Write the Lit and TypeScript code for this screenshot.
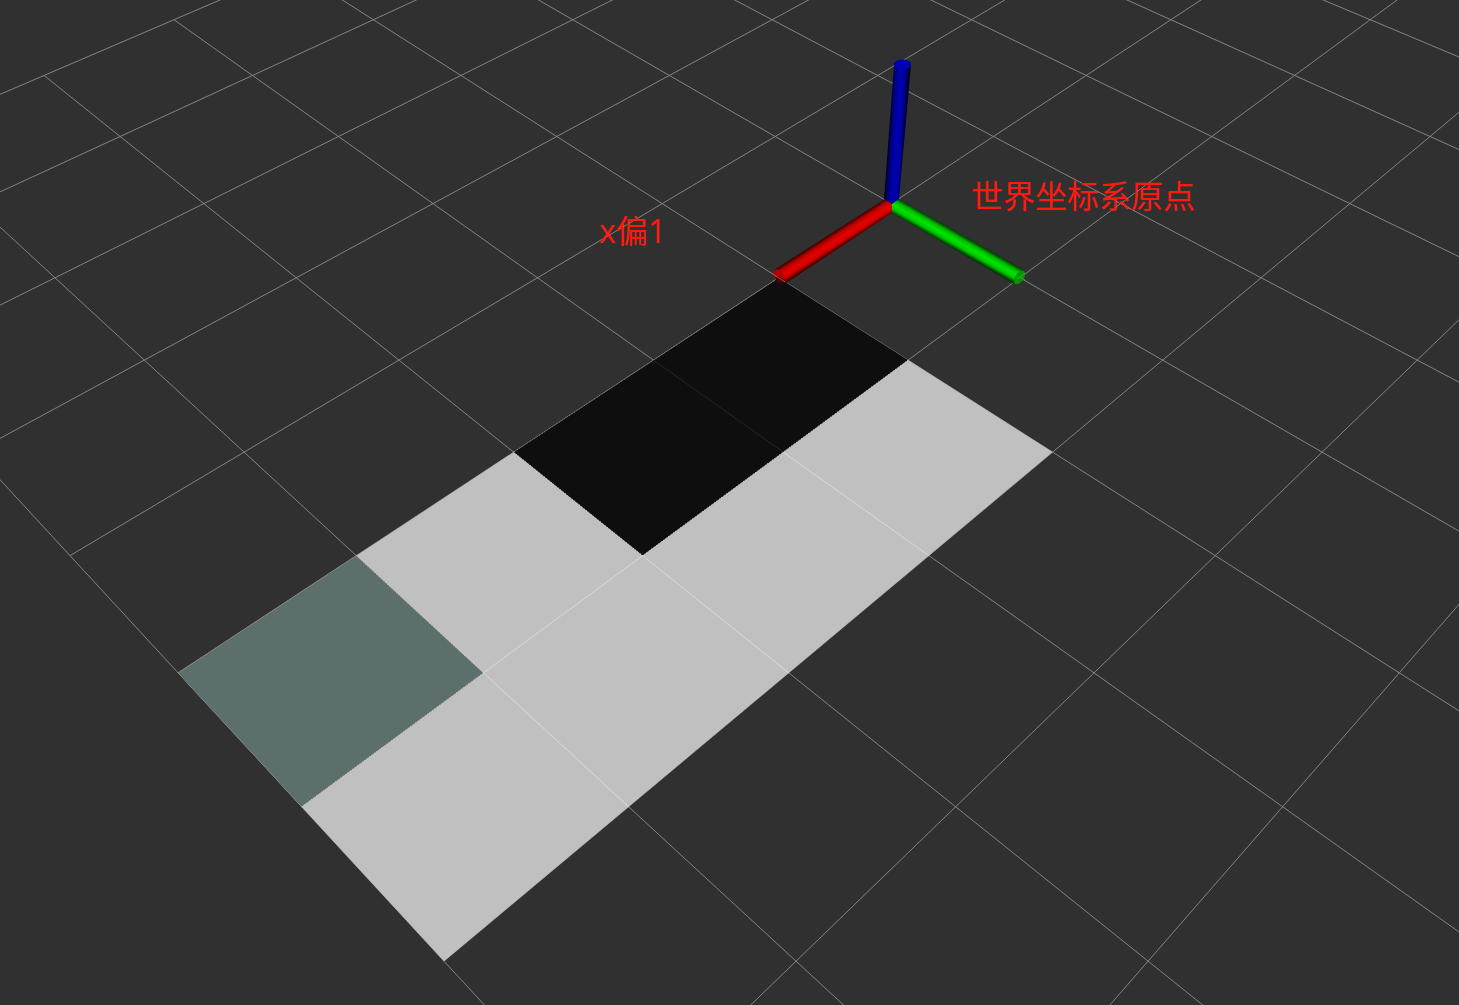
import { LitElement, html, svg, css } from "lit";
import { customElement } from "lit/decorators.js";

type Point = [number, number];
type Segment = [number, number, number, number];

const HALF = 5;

/** Projects a point of the ground plane onto the view. */
function project(x: number, y: number): Point {
  const depth = 1 - 0.04985 * (x + y);
  const side = (y - x) / 2;
  return [740.9 + (150.5 + 229.2 * side) / depth, -1209.8 + 1413.4 / depth];
}

function path(points: Point[]): string {
  return points
    .map(([x, y]) => project(x, y).map((n) => n.toFixed(1)).join(","))
    .join(" ");
}

const steps = Array.from({ length: 2 * HALF + 1 }, (_, i) => i - HALF);
const gridLines: Segment[] = [
  ...steps.map((n): Segment => [n, -HALF, n, HALF]),
  ...steps.map((n): Segment => [-HALF, n, HALF, n]),
];

const regions: { kind: string; points: Point[] }[] = [
  { kind: "free", points: [[1, 0], [1, 2], [5, 2], [5, 0]] },
  { kind: "occupied", points: [[1, 0], [1, 1], [3, 1], [3, 0]] },
  { kind: "unknown", points: [[4, 0], [4, 1], [5, 1], [5, 0]] },
];

const seams: { kind: string; line: Segment }[] = [
  { kind: "on-dark", line: [2, 0, 2, 1] },
  { kind: "on-light", line: [2, 1, 2, 2] },
  { kind: "on-light", line: [3, 1, 3, 2] },
  { kind: "on-light", line: [4, 1, 4, 2] },
  { kind: "on-light", line: [3, 1, 4, 1] },
  { kind: "edge", line: [1, 1, 3, 1] },
  { kind: "edge", line: [3, 0, 3, 1] },
  { kind: "edge", line: [4, 0, 4, 1] },
  { kind: "edge", line: [4, 1, 5, 1] },
  { kind: "rim", line: [1, 0, 3, 0] },
  { kind: "rim", line: [4, 0, 5, 0] },
];

@customElement("app-root")
export class AppRoot extends LitElement {
  static styles = css`
    :host {
      display: block;
      height: 100vh;
      background: #303030;
    }
    .scene {
      display: block;
      width: 100%;
      height: 100%;
    }
    .grid {
      stroke: #848484;
      stroke-width: 1;
      fill: none;
    }
    .free {
      fill: #c0c0c0;
    }
    .occupied {
      fill: #0e0e0e;
    }
    .unknown {
      fill: #5c6f6c;
    }
    .on-dark {
      stroke: #262626;
    }
    .on-light {
      stroke: #dadada;
    }
    .edge {
      stroke: #d6d6d6;
      stroke-dasharray: 1 2;
      stroke-width: 1;
    }
    .rim {
      stroke: #8c8c8c;
      stroke-dasharray: 1 1;
      stroke-width: 1;
    }
    .label {
      fill: #ff1a10;
      font-family: "Open Sans", "Noto Sans CJK SC", sans-serif;
      font-size: 32px;
    }
  `;

  private line(kind: string, [x1, y1, x2, y2]: Segment) {
    const [ax, ay] = project(x1, y1);
    const [bx, by] = project(x2, y2);
    return svg`<line class=${kind} x1=${ax} y1=${ay} x2=${bx} y2=${by}></line>`;
  }

  render() {
    return html`
      <svg
        class="scene"
        viewBox="0 0 1459 1005"
        preserveAspectRatio="xMidYMid slice"
        role="img"
        aria-label="世界坐标系原点"
      >
        <defs>
          <linearGradient id="blue" gradientUnits="userSpaceOnUse" x1="888" y1="132" x2="905" y2="133">
            <stop offset="0" stop-color="#000018"></stop>
            <stop offset="0.25" stop-color="#000080"></stop>
            <stop offset="0.5" stop-color="#0000b4"></stop>
            <stop offset="0.75" stop-color="#0000a4"></stop>
            <stop offset="1" stop-color="#000030"></stop>
          </linearGradient>
          <linearGradient id="red" gradientUnits="userSpaceOnUse" x1="830" y1="234" x2="839" y2="248">
            <stop offset="0" stop-color="#300000"></stop>
            <stop offset="0.25" stop-color="#b80000"></stop>
            <stop offset="0.5" stop-color="#e40000"></stop>
            <stop offset="0.75" stop-color="#d00000"></stop>
            <stop offset="1" stop-color="#400000"></stop>
          </linearGradient>
          <linearGradient id="green" gradientUnits="userSpaceOnUse" x1="961" y1="234" x2="953" y2="248">
            <stop offset="0" stop-color="#003000"></stop>
            <stop offset="0.25" stop-color="#00b800"></stop>
            <stop offset="0.5" stop-color="#00e400"></stop>
            <stop offset="0.75" stop-color="#00c800"></stop>
            <stop offset="1" stop-color="#003800"></stop>
          </linearGradient>
        </defs>

        <g class="grid">${gridLines.map((l) => this.line("", l))}</g>
        ${regions.map(
          (r) => svg`<polygon class=${r.kind} points=${path(r.points)}></polygon>`,
        )}
        ${seams.map((s) => this.line(s.kind, s.line))}

        <polygon fill="url(#red)" points="885,199 892,203 892,213 786,283 777,279 774,270"></polygon>
        <ellipse cx="779" cy="276" rx="4.5" ry="7.5" transform="rotate(-38 779 276)" fill="#b00000"></ellipse>
        <path d="M775 278l3-2 7 4-2 3-4 1z" fill="#4c0000"></path>
        <path d="M773 274l12 8" stroke="#b86a6a" stroke-width="0.8"></path>

        <polygon fill="url(#green)" points="899,199 892,203 892,213 1014,284 1020,278 1024,270"></polygon>
        <ellipse cx="1019.5" cy="277.5" rx="4.2" ry="7.8" transform="rotate(35 1019.5 277.5)" fill="#009600"></ellipse>
        <path d="M1017 279l3-2 5-4M1020 277l5 3" fill="none" stroke="#48a848" stroke-width="0.8"></path>

        <polygon fill="url(#blue)" points="894,65 911,65 899,199 892,204 884,199"></polygon>
        <ellipse cx="902.4" cy="64.5" rx="8.6" ry="5" fill="#0000b4"></ellipse>

        <text class="label" x="599" y="243">x偏1</text>
        <text class="label" x="971" y="208">世界坐标系原点</text>
      </svg>
    `;
  }
}
